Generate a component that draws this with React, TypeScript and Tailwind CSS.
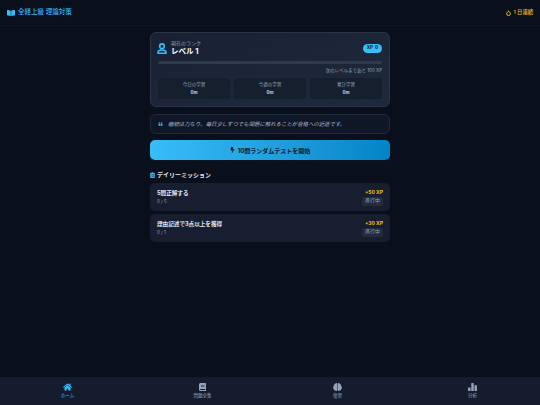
import React from 'react';
import { FaBookOpen, FaBolt, FaBrain, FaHome, FaQuoteLeft, FaClipboardList, FaBook } from 'react-icons/fa';

const BarsIcon: React.FC<{ className?: string }> = ({ className }) => (
  <svg viewBox="0 0 10 9" fill="currentColor" className={className}>
    <rect x="0" y="5" width="2.8" height="4" rx="0.4" />
    <rect x="3.6" y="0" width="2.8" height="9" rx="0.4" />
    <rect x="7.2" y="2.5" width="2.8" height="6.5" rx="0.4" />
  </svg>
);

const PersonIcon: React.FC<{ className?: string }> = ({ className }) => (
  <svg viewBox="0 0 10 11" fill="none" stroke="currentColor" strokeWidth="1.6" className={className}>
    <circle cx="5" cy="3.2" r="2.3" />
    <path d="M1 10.2V9.4C1 8 2.4 7 5 7s4 1 4 2.4v.8z" strokeLinejoin="round" />
  </svg>
);

const FlameIcon: React.FC<{ className?: string }> = ({ className }) => (
  <svg viewBox="0 0 8 9" fill="none" stroke="currentColor" strokeWidth="1.5" className={className}>
    <path d="M4 1C4.2 2.2 7 3.2 7 5.6A3 3 0 0 1 1 5.6C1 4.4 1.8 3.8 2.3 3.2 2.8 3.6 3.8 2.4 4 1z" strokeLinejoin="round" />
  </svg>
);

const stats = [
  { label: '今日の学習', value: '0m' },
  { label: '今週の学習', value: '0m' },
  { label: '累計学習', value: '0m' },
];

const missions = [
  { title: '5問正解する', progress: '0 / 5', xp: '+50 XP' },
  { title: '理由記述で3点以上を獲得', progress: '0 / 1', xp: '+30 XP' },
];

const navItems = [
  { label: 'ホーム', icon: FaHome, active: true },
  { label: '問題全集', icon: FaBook, active: false },
  { label: '復習', icon: FaBrain, active: false },
  { label: '分析', icon: BarsIcon, active: false },
];

const App: React.FC = () => {
  return (
    <div className="flex flex-col h-[405px] w-[540px] overflow-hidden bg-[#0a0f1c] text-white font-['Inter','Noto_Sans_CJK_JP',sans-serif]">
      <header className="flex items-center justify-between h-[26px] shrink-0 px-[7px] border-b border-[#0f1524]">
        <div className="flex items-center gap-[3px] text-[#38bdf8]">
          <FaBookOpen className="w-[8px] h-[8px]" />
          <span className="text-[6.5px] font-medium">全経上級 理論対策</span>
        </div>
        <div className="flex items-center gap-[2px] text-[#fbbf24]">
          <FlameIcon className="w-[5px] h-[6px]" />
          <span className="text-[5.3px] font-medium">1 日連続</span>
        </div>
      </header>

      <main className="flex-1 flex flex-col items-center pt-[6px]">
        <div className="w-[240px] flex flex-col">
          <section className="h-[75px] rounded-[6px] border border-[#2a3446] bg-gradient-to-br from-[#182133] to-[#1e2a3c] px-[7px] pt-[7px]">
            <div className="flex items-center justify-between">
              <div className="flex items-center gap-[4px]">
                <PersonIcon className="w-[10px] h-[11px] -ml-[1px] text-[#38bdf8]" />
                <div className="flex flex-col">
                  <span className="text-[5px] leading-[7px] text-[#94a3b8]">現在のランク</span>
                  <span className="text-[7.5px] leading-[9px] font-bold">レベル 1</span>
                </div>
              </div>
              <span className="flex items-center gap-[2px] h-[9px] px-[4px] rounded-full bg-[#38bdf8] text-[#0f172a] text-[4.5px] font-bold">
                <span>XP</span>
                <span>0</span>
              </span>
            </div>
            <div className="h-[3px] mt-[5px] rounded-full bg-[#2f3a4d]" />
            <p className="mt-[4px] text-right text-[4.5px] leading-[6px] text-[#94a3b8]">次のレベルまであと 100 XP</p>
            <div className="grid grid-cols-3 gap-[4px] mt-[4px]">
              {stats.map((s) => (
                <div key={s.label} className="h-[21px] rounded-[3px] bg-[#161f2e] flex flex-col items-center justify-center gap-[1px]">
                  <span className="text-[4.5px] leading-[7px] text-[#94a3b8]">{s.label}</span>
                  <span className="text-[4.5px] leading-[7px] font-bold text-[#cbd5e1]">{s.value}</span>
                </div>
              ))}
            </div>
          </section>

          <section className="flex items-center gap-[5px] h-[20px] mt-[7px] px-[7px] rounded-[5px] border border-[#1c2a3c] bg-[#0f1727]">
            <FaQuoteLeft className="w-[5px] h-[4px] -mt-[1px] text-[#38bdf8]" />
            <p className="text-[5.4px] italic text-[#a8b5c6]">継続は力なり。毎日少しずつでも問題に触れることが合格への近道です。</p>
          </section>

          <button className="flex items-center justify-center gap-[3px] h-[20px] mt-[6px] rounded-[5px] bg-gradient-to-r from-[#38bdf8] to-[#0284c7] text-[#0f172a] text-[6px] font-bold">
            <FaBolt className="w-[5px] h-[6px]" />
            10問ランダムテストを開始
          </button>

          <h2 className="flex items-center gap-[2px] mt-[11px] h-[7px] text-[6px] font-bold text-[#e2e8f0]">
            <FaClipboardList className="w-[5px] h-[6px] text-[#38bdf8]" />
            デイリーミッション
          </h2>

          <div className="flex flex-col gap-[3px] mt-[5px]">
            {missions.map((m) => (
              <div key={m.title} className="flex items-center justify-between h-[28px] px-[7px] rounded-[5px] bg-[#161e30]">
                <div className="flex flex-col gap-[2px]">
                  <span className="text-[5.6px] leading-[8px] font-bold text-[#e2e8f0]">{m.title}</span>
                  <span className="text-[4.5px] leading-[6px] text-[#94a3b8]">{m.progress}</span>
                </div>
                <div className="flex flex-col items-end gap-[1px]">
                  <span className="text-[5px] leading-[7px] font-bold text-[#fbbf24]">{m.xp}</span>
                  <span className="flex items-center h-[9px] px-[3px] rounded-[2px] bg-[#232c3f] text-[5px] text-[#94a3b8]">進行中</span>
                </div>
              </div>
            ))}
          </div>
        </div>
      </main>

      <nav className="grid grid-cols-4 h-[28px] shrink-0 bg-[#141c2e]">
        {navItems.map((item) => {
          const Icon = item.icon;
          return (
            <div key={item.label} className={`flex flex-col items-center justify-center gap-[2px] ${item.active ? 'text-[#38bdf8]' : 'text-[#94a3b8]'}`}>
              <Icon className="w-[9px] h-[8px]" />
              <span className="text-[4.5px] leading-[6px]">{item.label}</span>
            </div>
          );
        })}
      </nav>
    </div>
  );
};

export default App;
